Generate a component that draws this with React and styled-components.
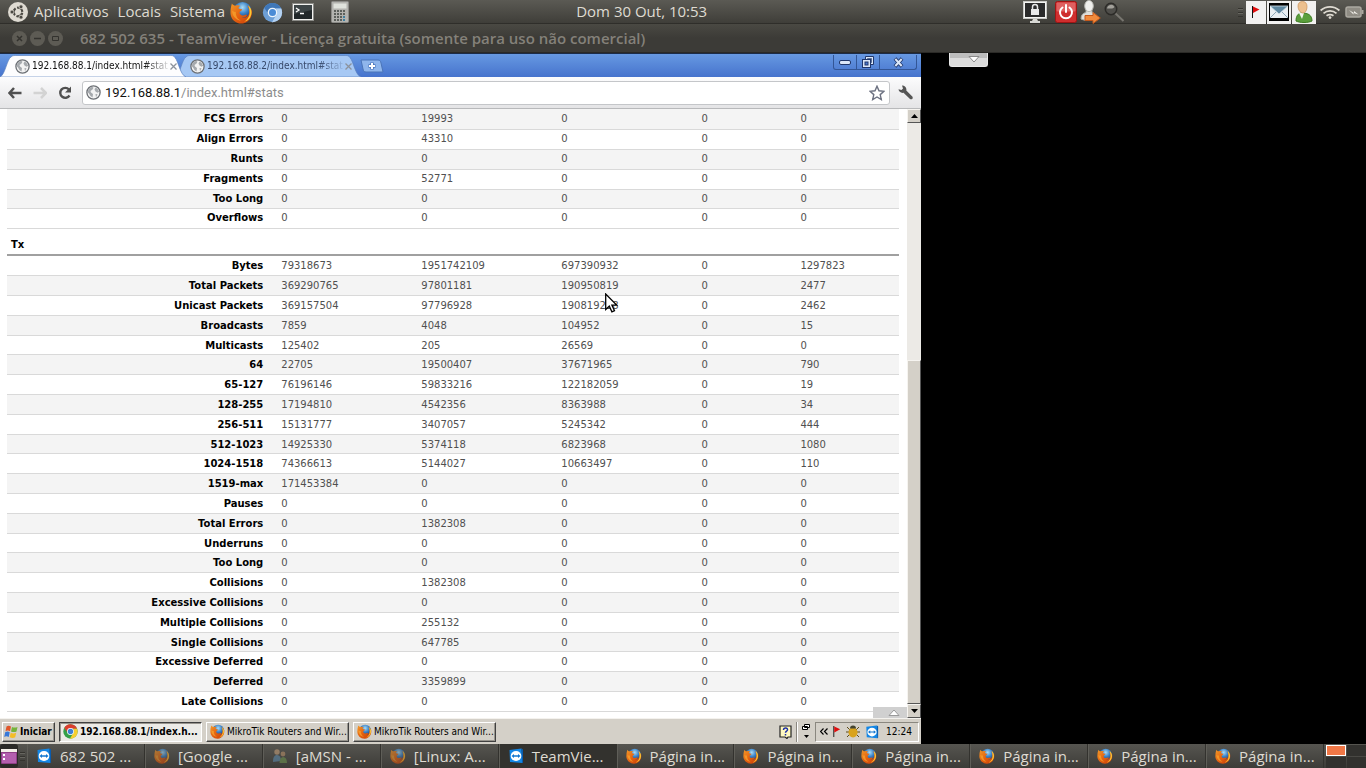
import { useId } from "react";
import styled, { createGlobalStyle, css } from "styled-components";

const uiFont = `"Open Sans", "Noto Sans", sans-serif`;
const winFont = `"DejaVu Sans Condensed", "DejaVu Sans", sans-serif`;

const rxRows = [
  ["FCS Errors", "0", "19993", "0", "0", "0"],
  ["Align Errors", "0", "43310", "0", "0", "0"],
  ["Runts", "0", "0", "0", "0", "0"],
  ["Fragments", "0", "52771", "0", "0", "0"],
  ["Too Long", "0", "0", "0", "0", "0"],
  ["Overflows", "0", "0", "0", "0", "0"],
];

const txRows = [
  ["Bytes", "79318673", "1951742109", "697390932", "0", "1297823"],
  ["Total Packets", "369290765", "97801181", "190950819", "0", "2477"],
  ["Unicast Packets", "369157504", "97796928", "190819258", "0", "2462"],
  ["Broadcasts", "7859", "4048", "104952", "0", "15"],
  ["Multicasts", "125402", "205", "26569", "0", "0"],
  ["64", "22705", "19500407", "37671965", "0", "790"],
  ["65-127", "76196146", "59833216", "122182059", "0", "19"],
  ["128-255", "17194810", "4542356", "8363988", "0", "34"],
  ["256-511", "15131777", "3407057", "5245342", "0", "444"],
  ["512-1023", "14925330", "5374118", "6823968", "0", "1080"],
  ["1024-1518", "74366613", "5144027", "10663497", "0", "110"],
  ["1519-max", "171453384", "0", "0", "0", "0"],
  ["Pauses", "0", "0", "0", "0", "0"],
  ["Total Errors", "0", "1382308", "0", "0", "0"],
  ["Underruns", "0", "0", "0", "0", "0"],
  ["Too Long", "0", "0", "0", "0", "0"],
  ["Collisions", "0", "1382308", "0", "0", "0"],
  ["Excessive Collisions", "0", "0", "0", "0", "0"],
  ["Multiple Collisions", "0", "255132", "0", "0", "0"],
  ["Single Collisions", "0", "647785", "0", "0", "0"],
  ["Excessive Deferred", "0", "0", "0", "0", "0"],
  ["Deferred", "0", "3359899", "0", "0", "0"],
  ["Late Collisions", "0", "0", "0", "0", "0"],
];

const windows = [
  { icon: "teamviewer", title: "682 502 ..." },
  { icon: "firefox", title: "[Google ...", dim: true },
  { icon: "people", title: "[aMSN - ...", dim: true },
  { icon: "firefox", title: "[Linux: A...", dim: true },
  { icon: "teamviewer", title: "TeamVie...", active: true },
  { icon: "firefox", title: "Página in..." },
  { icon: "firefox", title: "Página in..." },
  { icon: "firefox", title: "Página in..." },
  { icon: "firefox", title: "Página in..." },
  { icon: "firefox", title: "Página in..." },
  { icon: "firefox", title: "Página in..." },
];

/* ---------- icons ---------- */

const FirefoxIcon = ({ size = 16 }) => {
  const id = useId();
  return (
    <svg width={size} height={size} viewBox="0 0 24 24" aria-hidden="true">
      <defs>
        <radialGradient id={`${id}g`} cx="50%" cy="30%" r="65%">
          <stop offset="0" stopColor="#a9dcf7" />
          <stop offset="0.5" stopColor="#3b83c8" />
          <stop offset="1" stopColor="#123a78" />
        </radialGradient>
        <linearGradient id={`${id}f`} x1="0" y1="0" x2="1" y2="1">
          <stop offset="0" stopColor="#f39a28" />
          <stop offset="0.5" stopColor="#e4600f" />
          <stop offset="1" stopColor="#c63d08" />
        </linearGradient>
      </defs>
      <circle cx="13" cy="10.500" r="9.500" fill={`url(#${id}g)`} />
      <path d="M2 2.500c1 1.500 2.200 2.200 3.600 2.400 2-.9 3.800-.6 5.400.4-1.200.3-2 1.200-2.200 2.200 1 .8 2.600.9 3.800 1.200.3 1.200-1.900 1.900-2.500 2.900-.6 1.500.5 3 2.400 3.400 2.200.4 3.600-1.500 5.400-.4-.9 2.300-3.400 3.200-5.600 2.800 3.800 1 7.200-1.500 7.700-5.400.3-3-.6-5.700-2.200-7.500 2.300 1.200 3.900 3.300 4.400 5.500.1-1.200 0-2-.3-3 1.300 3 1.400 6.600 0 9.800C20 21 16.400 23.600 12 23.600 5.600 23.600.5 18.500.5 12.500.5 9 1 5.500 2 2.500z" fill={`url(#${id}f)`} />
      <path d="M19 4.500c3.700 3 4.600 8.500 2 12.700-1.600 2.600-4 4-6.500 4.500 4-2.200 6.200-6 6-10.200-.1-2.500-.8-5-1.500-7z" fill="#fbc935" />
      <path d="M2.300 10c-.4 5 3.200 9.800 9 10.600-4-2.100-5.600-5.600-5.200-9.300C4.800 11.600 3.200 11 2.300 10z" fill="#f6a02d" opacity="0.800" />
    </svg>
  );
};

const ChromiumIcon = () => (
  <svg width="21" height="21" viewBox="0 0 24 24" aria-hidden="true">
    <circle cx="12" cy="12" r="11" fill="#6d9fd6" />
    <path d="M2.500 6.500A11 11 0 0 1 22 7.500H12a5 5 0 0 0-4.500 6.500z" fill="#3f77b8" />
    <path d="M22 7.500A11 11 0 0 1 11.500 23l4.800-8.500a5 5 0 0 0-.8-7z" fill="#b4d2f2" />
    <circle cx="12" cy="12" r="5.500" fill="#eef5fc" />
    <circle cx="12" cy="12" r="4" fill="#4a8bd6" />
  </svg>
);

const ChromeIcon = () => (
  <svg width="15" height="15" viewBox="0 0 24 24" aria-hidden="true">
    <circle cx="12" cy="12" r="11.500" fill="#35a04a" />
    <path d="M2 6A11.500 11.500 0 0 1 22.500 7.500H12a5 5 0 0 0-4.500 6.500z" fill="#dc3e2e" />
    <path d="M22.500 7.500A11.500 11.500 0 0 1 11 23.500l5.500-9a5 5 0 0 0-1-7z" fill="#f7ce2e" />
    <circle cx="12" cy="12" r="5.500" fill="#fff" />
    <circle cx="12" cy="12" r="4.300" fill="#3f7fd4" />
  </svg>
);

const UbuntuIcon = () => (
  <svg width="20" height="20" viewBox="0 0 20 20" aria-hidden="true">
    <circle cx="10" cy="10" r="10" fill="#dfdbd2" />
    <circle cx="10" cy="10" r="4.300" fill="none" stroke="#4a4842" strokeWidth="2.200" strokeDasharray="7.400 1.600" strokeDashoffset="-0.800" />
    <g fill="#4a4842" stroke="#dfdbd2" strokeWidth="0.800">
      <circle cx="4" cy="10" r="2" />
      <circle cx="13" cy="4.800" r="2" />
      <circle cx="13" cy="15.200" r="2" />
    </g>
  </svg>
);

const TerminalIcon = () => (
  <svg width="22" height="18" viewBox="0 0 22 18" aria-hidden="true">
    <rect x="0.500" y="0.500" width="21" height="17" fill="#f1f1ef" stroke="#8c8c88" />
    <rect x="2" y="2" width="18" height="14" fill="#22282a" />
    <path d="M2 2h18v5L2 11z" fill="#3c4446" />
    <path d="M4 5l3 2-3 2M8 10.500h4" stroke="#fff" strokeWidth="1.300" fill="none" />
  </svg>
);

const CalculatorIcon = () => (
  <svg width="18" height="22" viewBox="0 0 18 22" aria-hidden="true">
    <rect x="0.500" y="0.500" width="17" height="21" rx="1" fill="#b3b3af" stroke="#8b8b87" />
    <rect x="2.500" y="2.500" width="13" height="5" fill="#dfe2dc" />
    {[9, 12, 15, 18].map((y) =>
      [3, 6, 9, 12].map((x) => (
        <rect key={`${x}-${y}`} x={x} y={y} width="2" height="2" fill={x === 12 && y > 12 ? "#3f7fa0" : "#5c605c"} />
      ))
    )}
  </svg>
);

const LockScreenIcon = () => (
  <svg width="24" height="22" viewBox="0 0 24 22" aria-hidden="true">
    <rect x="0.500" y="0.500" width="23" height="17" fill="#f4f4f2" stroke="#c9c9c5" />
    <rect x="2" y="2" width="20" height="14" fill="#2b2b2b" />
    <path d="M9.500 8V6a2.500 2.500 0 0 1 5 0v2" stroke="#e8e8e8" strokeWidth="1.500" fill="none" />
    <rect x="8" y="8" width="8" height="6" fill="#e8e8e8" />
    <path d="M10 18h4l1 2h2v2H7v-2h2z" fill="#d8d8d4" />
  </svg>
);

const PowerIcon = () => (
  <svg width="22" height="22" viewBox="0 0 22 22" aria-hidden="true">
    <rect x="0.500" y="0.500" width="21" height="21" rx="2" fill="#cf2e2e" stroke="#a01414" />
    <rect x="1.500" y="1.500" width="19" height="9" rx="1" fill="#df6060" />
    <path d="M7.500 6.500a6 6 0 1 0 7 0M11 4v7" stroke="#fff" strokeWidth="2" fill="none" strokeLinecap="round" />
  </svg>
);

const SwitchUserIcon = () => (
  <svg width="21" height="24" viewBox="0 0 21 24" aria-hidden="true">
    <path d="M1 19c0-4 2-6 5-6.500v-3h6v3c3 .5 5 2.500 5 6.500-4 2-12 2-16 0z" fill="#dededa" stroke="#a8a8a2" />
    <ellipse cx="9" cy="6" rx="4.300" ry="5.600" fill="#efefec" stroke="#b5b5af" />
    <path d="M5 15.500h8v-3l7.300 5.500-7.300 5.500v-3H5z" fill="#f08a3c" stroke="#c4581a" />
  </svg>
);

const SearchIcon = () => (
  <svg width="21" height="21" viewBox="0 0 21 21" aria-hidden="true">
    <path d="M11 11l8.500 8" stroke="#77756f" strokeWidth="2" />
    <circle cx="7" cy="7" r="5.700" fill="#4f4e4a" stroke="#2c2b28" strokeWidth="1.500" />
    <path d="M3 6.500a4 4 0 0 1 7.500-1.500C8.500 7.500 6 6 3 6.500z" fill="#a3a19b" />
  </svg>
);

const FlagIcon = ({ height = 12 }) => (
  <svg width="8" height={height} viewBox="0 0 8 12" aria-hidden="true">
    <path d="M0.500 0v12" stroke="#111" />
    <path d="M1 0.500l6.500 3L1 7z" fill="#e00d0d" />
  </svg>
);

const MailIcon = () => (
  <svg width="20" height="18" viewBox="0 0 20 18" aria-hidden="true">
    <rect width="20" height="18" fill="#000" />
    <rect x="1" y="3" width="18" height="12" fill="#e8eef2" />
    <path d="M1 15l6-6M19 15l-6-6" stroke="#8aa5b5" />
    <path d="M1 3h18l-9 8z" fill="#5d87a0" stroke="#d5e2ea" strokeWidth="0.800" />
  </svg>
);

const BuddyIcon = () => (
  <svg width="18" height="22" viewBox="0 0 18 22" aria-hidden="true">
    <path d="M1 20c0-5 2-8 6-8 6 0 10 2 10 8-4 2-12 2-16 0z" fill="#5b9f3c" stroke="#3c7a22" />
    <path d="M4 12l3 6 2-6z" fill="#f5f5f0" />
    <path d="M3 5c0-3 2-4.500 4.500-4.500S12 2 12 5.500 10.500 12 8 12 3 9 3 5z" fill="#ecc08e" stroke="#c89057" strokeWidth="0.700" />
  </svg>
);

const WifiIcon = () => (
  <svg width="20" height="14" viewBox="0 0 20 14" aria-hidden="true">
    <g fill="none" stroke="#dfdbd2" strokeWidth="1.700">
      <path d="M0.600 5.500a14 14 0 0 1 18.800 0" />
      <path d="M3.500 8.300a10 10 0 0 1 13 0" />
      <path d="M6.500 10.800a6 6 0 0 1 7 0" />
    </g>
    <circle cx="10" cy="12.600" r="1.400" fill="#dfdbd2" />
  </svg>
);

const BatteryIcon = () => (
  <svg width="19" height="12" viewBox="0 0 19 12" aria-hidden="true">
    <rect x="1" y="1" width="15" height="10" rx="2" fill="#8f8c84" stroke="#aca9a1" strokeWidth="1.500" />
    <path d="M17.500 4v4" stroke="#aca9a1" strokeWidth="2" />
    <path d="M4 4l5 3V5l4.500 3.500L8.500 7v1.500z" fill="#f0eee8" />
  </svg>
);

const GlobeIcon = () => (
  <svg width="15" height="15" viewBox="0 0 15 15" aria-hidden="true">
    <circle cx="7.500" cy="7.500" r="6.600" fill="#f2f2f2" stroke="#6c7075" strokeWidth="1.300" />
    <path d="M3 3.500l3-1.700 1.500 1-1 1.700L4.500 6l.5 1.500 2 1.500-.5 3.500L4.500 11 3 8.500 1.500 7z" fill="#a5a9ad" />
    <path d="M9.500 2.500l2 1.200 1.700 3-1.700 1-2-1.200-1-2zM9.500 9l2 .3-1.500 3z" fill="#a5a9ad" />
  </svg>
);

const BackIcon = ({ color = "#505050", flip }) => (
  <svg width="14" height="12" viewBox="0 0 14 12" aria-hidden="true">
    <path
      d={flip ? "M8 1l5 5-5 5M12 6H0.500" : "M6 1L1.500 6 6 11M2 6h11.500"}
      stroke={color}
      strokeWidth="2.500"
      fill="none"
    />
  </svg>
);

const ReloadIcon = () => (
  <svg width="14" height="14" viewBox="0 0 14 14" aria-hidden="true">
    <path d="M11.500 9.500A5 5 0 1 1 11 3.500" stroke="#505050" strokeWidth="2.400" fill="none" />
    <path d="M13 0.500V6.500H7z" fill="#505050" />
  </svg>
);

const StarIcon = () => (
  <svg width="16" height="16" viewBox="0 0 16 16" aria-hidden="true">
    <path d="M8 1.200l2 4.600 5 .5-3.800 3.300 1.100 4.900L8 12l-4.300 2.500 1.100-4.900L1 6.300l5-.5z" fill="#fff" stroke="#6b7080" strokeWidth="1.400" />
  </svg>
);

const WrenchIcon = () => (
  <svg width="16" height="15" viewBox="0 0 16 15" aria-hidden="true">
    <path d="M4 0.500L5 3.500 3.500 5 0.500 4.300C0.800 6.800 3 8.300 5.500 7.800L12 14c1.600 1.200 3.600-.8 2.300-2.400L8.300 5.500C8.900 3 7 .4 4 .5z" fill="#555" />
  </svg>
);

const TeamViewerIcon = ({ size = 16 }) => (
  <svg width={size} height={size} viewBox="0 0 16 16" aria-hidden="true">
    <path d="M1.500 2L13.500 0.500 14.500 15 2 14z" fill="#1487e6" />
    <path d="M13.500 0.500l1.500 1v13l-1 .5z" fill="#0a5cae" />
    <ellipse cx="8" cy="8" rx="5.300" ry="5" fill="#fff" />
    <path d="M3.500 8L6 6v1.300h4V6l2.500 2L10 10V8.700H6V10z" fill="#1277d0" />
  </svg>
);

const PeopleIcon = () => (
  <svg width="16" height="16" viewBox="0 0 16 16" aria-hidden="true">
    <circle cx="5" cy="4" r="2.700" fill="#c19c78" />
    <path d="M1 14c0-5 1.500-7 4-7s4 2 4 6z" fill="#5c87a8" />
    <circle cx="11" cy="6" r="2.400" fill="#b48d68" />
    <path d="M7.500 15c0-4 1.500-6 3.700-6s3.800 2 3.800 6z" fill="#6c8f4e" />
  </svg>
);

const WindowsFlag = () => (
  <svg width="14" height="14" viewBox="0 0 14 14" aria-hidden="true">
    <path d="M2.500 1.500c1.500-1 3-.8 4.500 0L6 6.200c-1.500-.8-3-.9-4.500 0z" fill="#e0562b" />
    <path d="M8 2c1.500.8 3.500.8 5.500 0l-1 4.500C11 7.300 9 7.300 7 6.600z" fill="#74b33a" />
    <path d="M1.200 7.300c1.500-1 3-.8 4.500 0L4.700 12c-1.500-.8-3-.9-4.500 0z" fill="#3778d8" />
    <path d="M6.700 7.800c1.500.8 3.500.8 5.500 0l-1 4.500c-1.500.8-3.500.8-5.500 0z" fill="#f4bd28" />
  </svg>
);

const HelpIcon = () => (
  <svg width="13" height="14" viewBox="0 0 13 14" aria-hidden="true">
    <path d="M1 1h11v11h-3l-1 1.500L6 12H1z" fill="#fff9c0" stroke="#222" strokeWidth="1.200" />
    <path d="M4.500 5c0-3 4.500-2.500 4 0-.2 1.200-2 1.200-2 2.700M6.500 9v1.500" stroke="#1d2fa8" strokeWidth="1.500" fill="none" />
  </svg>
);

const BugIcon = () => (
  <svg width="14" height="13" viewBox="0 0 14 13" aria-hidden="true">
    <path d="M1 2l3 3M13 2l-3 3M0 7h14M1 12l3-3M13 12l-3-3" stroke="#5b4a18" />
    <ellipse cx="7" cy="7.500" rx="4.500" ry="5" fill="#d9a31c" />
    <path d="M4 3.500a3 3 0 0 1 6 0z" fill="#44442f" />
  </svg>
);

const DesktopIcon = () => (
  <svg width="16" height="16" viewBox="0 0 16 16" aria-hidden="true">
    <rect y="1" width="16" height="15" rx="1" fill="#8e3f86" />
    <rect x="1" y="5" width="14" height="10" fill="#b45fae" />
    <rect y="1" width="16" height="3" fill="#f4f0e8" />
    <path d="M2 6h2v2H2zM2 10h2v2H2z" fill="#fff" />
  </svg>
);

const Cursor = () => (
  <svg width="13" height="20" viewBox="0 0 13 20" aria-hidden="true">
    <path d="M0.700 1v15.500l3.600-3.300 2.600 5.600 2.600-1.200-2.600-5.400h5z" fill="#fff" stroke="#000" strokeWidth="1.300" />
  </svg>
);

const icons = {
  teamviewer: TeamViewerIcon,
  firefox: FirefoxIcon,
  people: PeopleIcon,
};

/* ---------- app ---------- */

const StatRow = ({ cells }) => (
  <Row>
    <RowLabel scope="row">{cells[0]}</RowLabel>
    {cells.slice(1).map((value, i) => (
      <Cell key={i}>{value}</Cell>
    ))}
  </Row>
);

const BrowserTab = ({ active, title }) => (
  <Tab $active={active}>
    <TabShape viewBox="0 0 184 23" preserveAspectRatio="none" aria-hidden="true">
      <path
        d="M0 23C5 21 7 4 11 2 12 1 13 0.500 15 0.500H169c2 0 3 .5 4 2 4 5 5 18 11 20.500z"
        fill={active ? "#fdfdfe" : "#a6c8f4"}
        stroke="#5c82bf"
        strokeWidth="0.700"
      />
    </TabShape>
    <TabLabel>
      <GlobeIcon />
      <TabText>{title}</TabText>
      <CloseTab aria-label="Fechar aba">
        <svg width="7" height="7" viewBox="0 0 7 7">
          <path d="M0.500 0.500l6 6M6.500 0.500l-6 6" stroke="#8c929c" strokeWidth="1.300" />
        </svg>
      </CloseTab>
    </TabLabel>
  </Tab>
);

const App = () => {
  return (
    <Desktop>
      <GlobalStyle />
      <TopPanel>
        <PanelSide>
          <MenuBar>
            <UbuntuIcon />
            <PanelMenu>Aplicativos</PanelMenu>
            <PanelMenu>Locais</PanelMenu>
            <PanelMenu>Sistema</PanelMenu>
          </MenuBar>
          <Launchers>
            <PanelIcon aria-label="Firefox"><FirefoxIcon size={23} /></PanelIcon>
            <PanelIcon aria-label="Chromium"><ChromiumIcon /></PanelIcon>
            <PanelIcon aria-label="Terminal"><TerminalIcon /></PanelIcon>
            <PanelIcon $before={8} aria-label="Calculadora"><CalculatorIcon /></PanelIcon>
          </Launchers>
        </PanelSide>
        <Clock>Dom 30 Out, 10:53</Clock>
        <PanelSide $end>
          <Session>
            <PanelIcon aria-label="Bloquear tela"><LockScreenIcon /></PanelIcon>
            <PanelIcon $before={5} aria-label="Desligar"><PowerIcon /></PanelIcon>
            <PanelIcon aria-label="Trocar usuário"><SwitchUserIcon /></PanelIcon>
            <PanelIcon aria-label="Pesquisar"><SearchIcon /></PanelIcon>
          </Session>
          <Tray>
            <Grip />
            <TrayTile $width={20}><FlagIcon /></TrayTile>
            <TrayTile $width={24}><MailIcon /></TrayTile>
            <TrayTile $width={24}><BuddyIcon /></TrayTile>
            <TrayPlain $width={25}><WifiIcon /></TrayPlain>
            <TrayPlain $width={23}><BatteryIcon /></TrayPlain>
          </Tray>
        </PanelSide>
      </TopPanel>

      <TitleBar>
        <WindowButtons>
          <RoundButton aria-label="Fechar">
            <svg width="7" height="7" viewBox="0 0 7 7"><path d="M1 1l5 5M6 1L1 6" stroke="#33322e" strokeWidth="1.500" /></svg>
          </RoundButton>
          <RoundButton aria-label="Minimizar">
            <svg width="7" height="7" viewBox="0 0 7 7"><path d="M0 3.500h7" stroke="#33322e" strokeWidth="1.500" /></svg>
          </RoundButton>
          <RoundButton aria-label="Maximizar">
            <svg width="7" height="7" viewBox="0 0 7 7"><path d="M0.500 1.500h6v4h-6z" stroke="#33322e" fill="none" /></svg>
          </RoundButton>
        </WindowButtons>
        <Title>682 502 635 - TeamViewer - Licença gratuita (somente para uso não comercial)</Title>
      </TitleBar>

      <Viewer>
        <Remote>
          <TabStrip>
            <BrowserTab active title="192.168.88.1/index.html#stat" />
            <BrowserTab title="192.168.88.2/index.html#stat" />
            <NewTab aria-label="Nova aba">
              <svg width="24" height="14" viewBox="0 0 24 14">
                <path d="M1 1h17c2 0 2.500 1 3 3l2 9H6c-2 0-2.500-1-3-3z" fill="#8fb6ec" stroke="#4a74b8" />
                <path d="M12 3.500v7M8.500 7h7" stroke="#4a74b8" strokeWidth="3.500" />
                <path d="M12 4v6M9 7h6" stroke="#fff" strokeWidth="2" />
              </svg>
            </NewTab>
            <Caption>
              <CaptionButton $width={22} aria-label="Minimizar">
                <svg width="12" height="5" viewBox="0 0 12 5"><rect x="0.500" y="0.500" width="11" height="4" rx="1.500" fill="#dbe7f8" stroke="#20376b" /></svg>
              </CaptionButton>
              <CaptionButton $width={23} aria-label="Restaurar">
                <svg width="12" height="12" viewBox="0 0 12 12">
                  <path d="M3.500 3.500v-3h8v8h-3" fill="#dbe7f8" stroke="#20376b" />
                  <path d="M5.500 3V2.500h4v4H9" fill="none" stroke="#20376b" strokeWidth="0.700" />
                  <rect x="0.500" y="3.500" width="8" height="8" fill="#dbe7f8" stroke="#20376b" />
                  <rect x="3" y="6" width="3" height="3" fill="#4a78cf" stroke="#20376b" />
                </svg>
              </CaptionButton>
              <CaptionButton $width={37} aria-label="Fechar">
                <svg width="11" height="11" viewBox="0 0 11 11">
                  <path d="M2 1.500l7 8M9 1.500l-7 8" stroke="#20376b" strokeWidth="3.600" />
                  <path d="M2.300 2l6.400 7M8.700 2L2.300 9" stroke="#dbe7f8" strokeWidth="2" />
                </svg>
              </CaptionButton>
            </Caption>
          </TabStrip>

          <Toolbar>
            <ToolButton aria-label="Voltar"><BackIcon /></ToolButton>
            <ToolButton aria-label="Avançar"><BackIcon color="#d3d3d3" flip /></ToolButton>
            <ToolButton aria-label="Recarregar"><ReloadIcon /></ToolButton>
            <AddressBar>
              <GlobeIcon />
              <Address>192.168.88.1<span>/index.html#stats</span></Address>
              <ToolButton aria-label="Favoritos"><StarIcon /></ToolButton>
            </AddressBar>
            <ToolButton aria-label="Ferramentas"><WrenchIcon /></ToolButton>
          </Toolbar>

          <Content>
            <Page>
              <StatsTable>
                <colgroup>
                  <Col $width="30.3%" />
                  <Col $width="15.7%" />
                  <Col $width="15.7%" />
                  <Col $width="15.7%" />
                  <Col $width="11.1%" />
                  <Col $width="11.5%" />
                </colgroup>
                <RowGroup>
                  {rxRows.map((cells) => (
                    <StatRow key={cells[0]} cells={cells} />
                  ))}
                </RowGroup>
                <tbody>
                  <tr>
                    <SectionTitle colSpan={6} scope="rowgroup">Tx</SectionTitle>
                  </tr>
                </tbody>
                <RowGroup $even>
                  {txRows.map((cells) => (
                    <StatRow key={cells[0]} cells={cells} />
                  ))}
                </RowGroup>
              </StatsTable>
              <Pointer><Cursor /></Pointer>
              <LowerTab>
                <svg width="12" height="7" viewBox="0 0 12 7"><path d="M1 6.500L6 1l5 5.500z" fill="#fff" stroke="#9a9a9a" /></svg>
              </LowerTab>
            </Page>
            <Scrollbar>
              <ScrollButton aria-label="Rolar para cima">
                <svg width="7" height="4" viewBox="0 0 7 4"><path d="M0 4l3.500-4L7 4z" /></svg>
              </ScrollButton>
              <TrackSpace />
              <Thumb />
              <ScrollButton aria-label="Rolar para baixo">
                <svg width="7" height="4" viewBox="0 0 7 4"><path d="M0 0h7L3.500 4z" /></svg>
              </ScrollButton>
            </Scrollbar>
          </Content>

          <WinTaskbar>
            <StartButton><WindowsFlag />Iniciar</StartButton>
            <WinTask $pressed><ChromeIcon />192.168.88.1/index.h...</WinTask>
            <WinTask><FirefoxIcon size={15} />MikroTik Routers and Wir...</WinTask>
            <WinTask><FirefoxIcon size={15} />MikroTik Routers and Wir...</WinTask>
            <WinRight>
              <HelpIcon />
              <Divider />
              <svg width="9" height="15" viewBox="0 0 9 15" aria-hidden="true">
                <path d="M2.500 0.500h5v3h-5zM0.500 2.500h5v3h-5z" fill="#fff" stroke="#000" />
                <path d="M2 11h5l-2.500 3z" />
              </svg>
              <WinTray>
                <svg width="8" height="7" viewBox="0 0 8 7" aria-hidden="true"><path d="M3.500 0.500l-3 3 3 3M7.500 0.500l-3 3 3 3" fill="none" stroke="#000" strokeWidth="1.200" /></svg>
                <FlagIcon height={11} />
                <BugIcon />
                <TeamViewerIcon size={14} />
                <WinClock>12:24</WinClock>
              </WinTray>
            </WinRight>
          </WinTaskbar>
        </Remote>
        <Blank>
          <PullTab aria-label="Painel">
            <svg width="12" height="7" viewBox="0 0 12 7"><path d="M1 0.500h10L6 6z" fill="#fff" stroke="#8a8a8a" /></svg>
          </PullTab>
        </Blank>
      </Viewer>

      <BottomPanel>
        <ShowDesktop aria-label="Mostrar área de trabalho"><DesktopIcon /></ShowDesktop>
        <Grip />
        <WindowList>
          {windows.map((win, i) => {
            const Icon = icons[win.icon];
            return (
              <WindowItem key={i} $active={win.active} $dim={win.dim}>
                <Icon />
                <span>{win.title}</span>
              </WindowItem>
            );
          })}
        </WindowList>
        <Workspaces>
          <Workspace $current aria-label="Espaço 1" />
          <Workspace aria-label="Espaço 2" />
          <Workspace aria-label="Espaço 3" />
          <Workspace aria-label="Espaço 4" />
        </Workspaces>
      </BottomPanel>
    </Desktop>
  );
};

/* ---------- styles ---------- */

const GlobalStyle = createGlobalStyle`
  * {
    box-sizing: border-box;
  }
  body {
    margin: 0;
    background: #000;
  }
  button {
    margin: 0;
    padding: 0;
    border: 0;
    background: none;
    color: inherit;
    font: inherit;
  }
  svg {
    display: block;
    flex-shrink: 0;
  }
`;

const Desktop = styled.div`
  display: flex;
  flex-direction: column;
  min-height: 100vh;
  overflow: hidden;
  font-family: ${uiFont};
`;

const TopPanel = styled.header`
  display: grid;
  grid-template-columns: 579fr auto 662fr;
  align-items: center;
  height: 24px;
  background: linear-gradient(#5b5a54, #3f3e39);
  border-bottom: 1px solid #2f2e2a;
  color: #dfdbd2;
  font-size: 15px;
  line-height: 20px;
`;

const PanelSide = styled.div`
  display: flex;
  align-items: center;
  justify-content: ${({ $end }) => ($end ? "flex-end" : "flex-start")};
`;

const MenuBar = styled.nav`
  display: flex;
  align-items: center;
  padding-left: 8px;
`;

const PanelMenu = styled.button`
  padding: 0 3px 2px 6px;
`;

const Launchers = styled.div`
  display: flex;
  align-items: center;
  gap: 9px;
  padding-left: 2px;
`;

const PanelIcon = styled.button`
  display: flex;
  margin-left: ${({ $before = 0 }) => $before}px;
`;

const Clock = styled.time`
  padding-bottom: 2px;
  white-space: nowrap;
`;

const Session = styled.div`
  display: flex;
  align-items: center;
  gap: 3px;
`;

const Tray = styled.div`
  display: flex;
  align-items: center;
  gap: 1px;
  height: 23px;
  padding-left: 113px;
`;

const Grip = styled.span`
  width: 5px;
  height: 9px;
  margin-right: 2px;
  background: repeating-linear-gradient(#35342f 0 1px, #66655f 1px 2px, transparent 2px 4px);
`;

const TrayPlain = styled.span`
  display: flex;
  align-items: center;
  justify-content: center;
  width: ${({ $width }) => $width}px;
  height: 23px;
`;

const TrayTile = styled(TrayPlain)`
  background: #f2f1f0;
`;

const TitleBar = styled.div`
  display: flex;
  align-items: center;
  height: 29px;
  padding-left: 12px;
  background: linear-gradient(#4a4943, #3c3b37 50%);
  border-bottom: 1px solid #2b2a27;
`;

const WindowButtons = styled.div`
  display: flex;
  gap: 3px;
`;

const RoundButton = styled.button`
  display: flex;
  align-items: center;
  justify-content: center;
  width: 15px;
  height: 15px;
  border-radius: 50%;
  background: #5d5b54;
`;

const Title = styled.h1`
  margin: 0 0 0 17px;
  color: #84817a;
  font-size: 15px;
  font-weight: 600;
  line-height: 20px;
  white-space: nowrap;
`;

const Viewer = styled.main`
  display: grid;
  grid-template-columns: 921fr 445fr;
  flex: 1;
`;

const Remote = styled.section`
  display: flex;
  flex-direction: column;
  min-width: 0;
  background: #fff;
  font-family: ${winFont};
  font-size: 11px;
`;

const TabStrip = styled.div`
  display: flex;
  height: 24px;
  padding-top: 1px;
  background: linear-gradient(#6799e2, #4673cd);
  border-top: 1px solid #1c2c48;
`;

const Tab = styled.div`
  display: grid;
  width: 186px;
  margin-right: -11px;
  z-index: ${({ $active }) => ($active ? 1 : 0)};
  color: ${({ $active }) => ($active ? "#111" : "#36486a")};

  > * {
    grid-area: 1 / 1;
  }
`;

const TabShape = styled.svg`
  width: 100%;
  height: 22px;
`;

const TabLabel = styled.div`
  display: flex;
  align-items: center;
  gap: 2px;
  min-width: 0;
  padding: 0 11px 0 15px;
`;

const TabText = styled.span`
  flex: 1;
  font-size: 10px;
  line-height: 16px;
  white-space: nowrap;
  mask-image: linear-gradient(to right, #000 112px, transparent 140px);
`;

const CloseTab = styled.button`
  display: flex;
`;

const NewTab = styled.button`
  display: flex;
  align-items: center;
  padding-left: 10px;
`;

const Caption = styled.div`
  display: flex;
  height: 15px;
  margin: 0 4px 0 auto;
  border: 1px solid #335696;
  border-top: 0;
  border-radius: 0 0 3px 3px;
`;

const CaptionButton = styled.button`
  display: flex;
  align-items: center;
  justify-content: center;
  width: ${({ $width }) => $width}px;

  & + & {
    border-left: 1px solid #335696;
  }
`;

const Toolbar = styled.div`
  display: flex;
  align-items: center;
  gap: 11px;
  height: 32px;
  padding: 0 7px 0 8px;
  background: linear-gradient(#fcfcfd, #e4e4e6);
  border-bottom: 1px solid #b8b9bb;
`;

const ToolButton = styled.button`
  display: flex;
`;

const AddressBar = styled.div`
  display: flex;
  flex: 1;
  align-items: center;
  gap: 4px;
  height: 24px;
  margin: 0 -3px 0 -1px;
  padding: 0 4px 0 3px;
  background: #fff;
  border: 1px solid #c4c6c9;
  border-radius: 3px;
`;

const Address = styled.div`
  flex: 1;
  color: #111;
  font-family: Roboto, sans-serif;
  font-size: 13px;
  line-height: 18px;

  span {
    color: #8d8d8d;
  }
`;

const Content = styled.div`
  display: flex;
  flex: 1;
`;

const Page = styled.div`
  position: relative;
  flex: 1;
  min-width: 0;
  padding: 0 8px 5px 7px;
`;

const StatsTable = styled.table`
  width: 100%;
  border-collapse: collapse;
  table-layout: fixed;
  color: #505050;
  font-family: "DejaVu Sans", sans-serif;
  font-size: 10px;
  line-height: 14px;
`;

const Col = styled.col`
  width: ${({ $width }) => $width};
`;

const Row = styled.tr`
  height: 20px;
`;

const RowLabel = styled.th`
  padding: 0 14px 0 4px;
  border-bottom: 1px solid #d9d9d9;
  color: #000;
  font-weight: 700;
  text-align: right;
  white-space: nowrap;
`;

const Cell = styled.td`
  padding: 0 4px;
  border-bottom: 1px solid #d9d9d9;
`;

const RowGroup = styled.tbody`
  ${Row}:nth-child(${({ $even }) => ($even ? "even" : "odd")}) {
    background: #f4f4f4;
  }
  ${Row}:nth-child(5n) {
    height: 19px;
  }
  ${RowLabel}, ${Cell} {
    padding-top: ${({ $even }) => ($even ? 2 : 0)}px;
  }
`;

const SectionTitle = styled.th`
  height: 27px;
  padding: 8px 4px 0;
  border-bottom: 2px solid #a0a0a0;
  color: #000;
  font-weight: 700;
  text-align: left;
`;

/* mouse pointer floating over the table */
const Pointer = styled.div`
  position: absolute;
  top: 184px;
  left: 605px;
`;

/* viewer handle laid over the lower right of the page */
const LowerTab = styled.div`
  position: absolute;
  right: 0;
  bottom: 0;
  display: flex;
  align-items: center;
  justify-content: center;
  width: 34px;
  height: 11px;
  padding-left: 8px;
  background: #d0d0d0;
`;

const Scrollbar = styled.div`
  display: flex;
  flex-direction: column;
  width: 14px;
  background: #eceae6;
`;

const ScrollButton = styled.button`
  display: flex;
  align-items: center;
  justify-content: center;
  width: 14px;
  height: 14px;
  background: #d4d0c8;
  border: 1px solid;
  border-color: #f6f4f0 #555 #555 #f6f4f0;
`;

const TrackSpace = styled.div`
  flex: 238 1 0;
`;

const Thumb = styled.div`
  flex: 343 1 0;
  background: #d4d0c8;
  border: 1px solid;
  border-color: #f6f4f0 #555 #555 #f6f4f0;
`;

const WinTaskbar = styled.div`
  display: flex;
  align-items: center;
  gap: 4px;
  height: 26px;
  padding: 1px 2px;
  background: #d4d0c8;
  border-top: 1px solid #f4f2ee;
  color: #000;
  font-size: 10px;
`;

const WinButton = styled.button`
  display: flex;
  align-items: center;
  gap: 2px;
  height: 20px;
  padding: 0 3px;
  border: 1px solid;
  border-color: #fff #404040 #404040 #fff;
  box-shadow: inset -1px -1px 0 #98958e;
  white-space: nowrap;
`;

const StartButton = styled(WinButton)`
  width: 53px;
  padding: 0 1px;
  font-weight: 700;
`;

const WinTask = styled(WinButton)`
  width: 143px;

  ${({ $pressed }) =>
    $pressed &&
    css`
      background: #ecebe7;
      border-color: #404040 #fff #fff #404040;
      box-shadow: inset 1px 1px 0 #98958e;
      font-weight: 700;
    `}
`;

const WinRight = styled.div`
  display: flex;
  align-items: center;
  gap: 4px;
  margin-left: auto;
`;

const Divider = styled.span`
  width: 2px;
  height: 20px;
  border-left: 1px solid #8a877f;
  border-right: 1px solid #fff;
`;

const WinTray = styled.div`
  display: flex;
  align-items: center;
  gap: 5px;
  height: 20px;
  padding: 0 6px 0 4px;
  border: 1px solid;
  border-color: #8a877f #fff #fff #8a877f;
`;

const WinClock = styled.time`
  padding-left: 2px;
`;

const Blank = styled.aside`
  background: #000;
`;

const PullTab = styled.button`
  display: flex;
  align-items: center;
  justify-content: center;
  width: 39px;
  height: 14px;
  margin-left: 28px;
  padding-left: 10px;
  background: linear-gradient(#bdbdbd 40%, #dcdcdc 40%);
  border: 1px solid #e9e9e9;
  border-top: 0;
  border-radius: 0 0 3px 3px;
`;

const BottomPanel = styled.footer`
  display: flex;
  align-items: center;
  height: 24px;
  background: linear-gradient(#565550, #3d3c38);
  color: #dfdbd2;
  font-size: 15px;
  line-height: 20px;
`;

const ShowDesktop = styled.button`
  display: flex;
  align-items: center;
  justify-content: center;
  width: 18px;
  height: 24px;
  margin-right: 2px;
  background: #2b2a27;
  border-radius: 3px;
`;

const WindowList = styled.div`
  display: flex;
  flex: 1;
  min-width: 0;
`;

const WindowItem = styled.button`
  display: flex;
  flex: 1 1 0;
  align-items: center;
  gap: 8px;
  min-width: 0;
  height: 24px;
  padding-left: 8px;
  overflow: hidden;
  border-left: 1px solid #5f5e58;
  border-right: 1px solid #33322e;
  background: ${({ $active }) => ($active ? "#33322e" : "none")};
  white-space: nowrap;

  svg {
    opacity: ${({ $dim }) => ($dim ? 0.6 : 1)};
  }
`;

const Workspaces = styled.div`
  display: grid;
  grid-template-columns: 20px 19px;
  grid-template-rows: 11px 11px;
  gap: 1px;
  padding-left: 2px;
`;

const Workspace = styled.button`
  background: ${({ $current }) => ($current ? "#f07746" : "#32312e")};
  border: ${({ $current }) => ($current ? "1px solid #fff" : "0")};
`;

export default App;
